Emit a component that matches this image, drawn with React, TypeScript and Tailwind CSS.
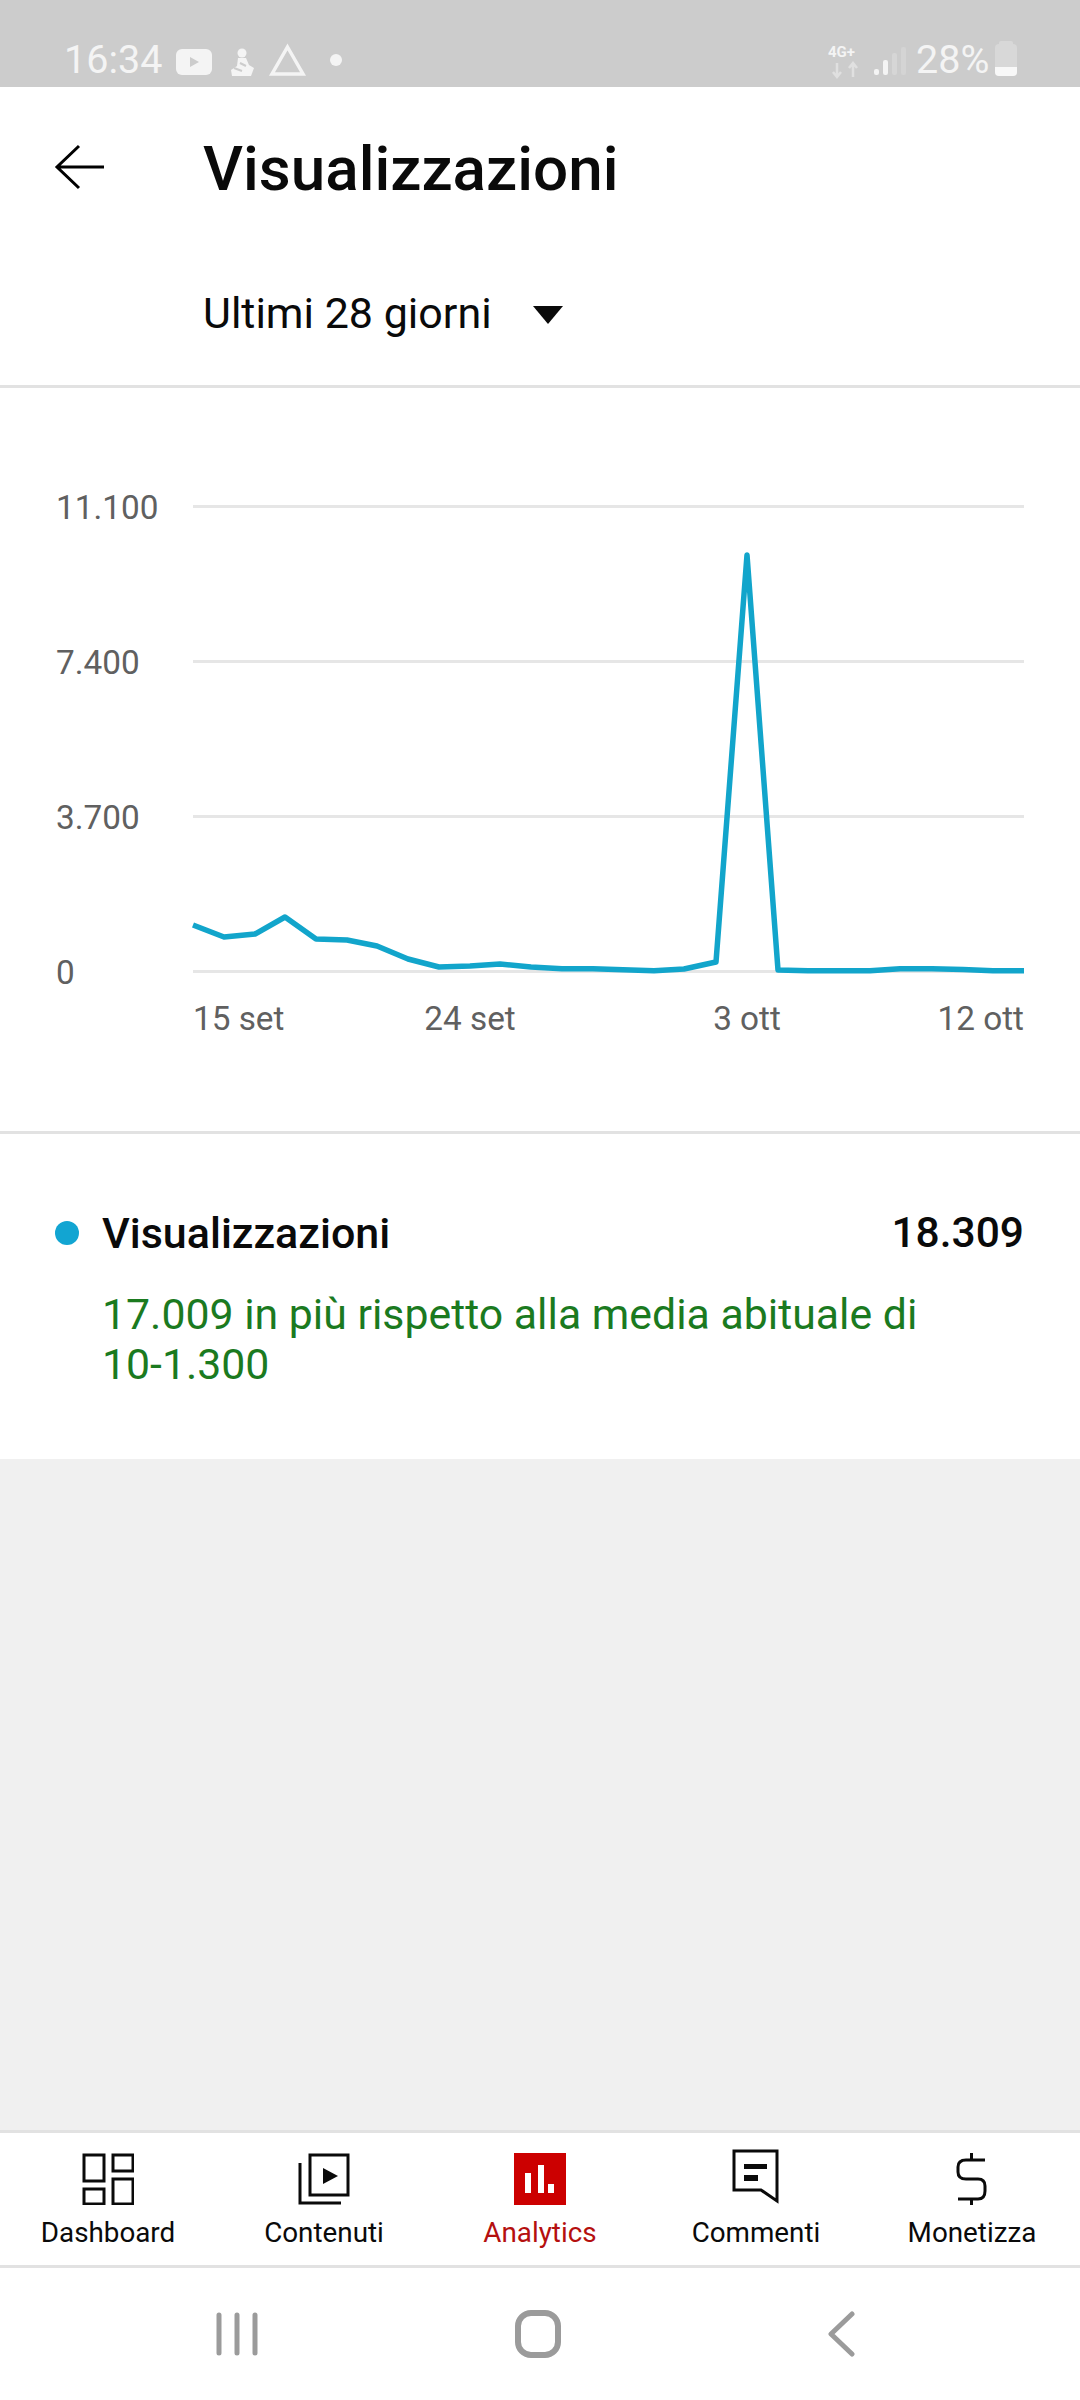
import React from "react";

const font = { fontFamily: "Roboto, sans-serif" };

const points =
  "193,925 224,937 255,934 285,917 316,939 347,940 377,946 408,959 439,967 470,966 500,964 531,967 562,968.7 593,968.7 623,969.7 654,970.7 684,969 716,962 747,555 778,970 808,970.7 839,970.7 870,970.7 900,968.7 932,968.7 963,969.5 993,970.7 1024,970.7";

const yTicks = ["11.100", "7.400", "3.700", "0"];

function StatusBar() {
  return (
    <div className="relative h-[87px] shrink-0 bg-[#cccccc] text-[#f4f4f4]">
      <div className="absolute left-[64px] top-[37px] text-[39.5px] leading-[46px]">16:34</div>
      <svg className="absolute left-[170px] top-[40px]" width="180" height="40" viewBox="170 40 180 40">
        <rect x="176" y="49" width="36" height="26" rx="6" fill="#f4f4f4" />
        <path d="M190 57v10l9-5z" fill="#cccccc" />
        <circle cx="242" cy="53" r="4.5" fill="#f4f4f4" />
        <path d="M238 58h8l3 7 5 3-3 8h-19l-1-6 6-4z" fill="#f4f4f4" />
        <path d="M234 68l8 3M240 63l6 3" stroke="#cccccc" strokeWidth="2" />
        <path d="M287.500 47L303 74H272Z" fill="none" stroke="#f4f4f4" strokeWidth="3.500" />
        <circle cx="336" cy="60" r="6" fill="#f4f4f4" />
      </svg>
      <div className="absolute left-[828px] top-[44px] text-[15px] leading-[17px] font-bold">4G+</div>
      <svg className="absolute left-[828px] top-[40px]" width="170" height="40" viewBox="828 40 170 40">
        <path d="M837 63v14M833 72l4 5 4-5" fill="none" stroke="#e0e0e0" strokeWidth="2.500" />
        <path d="M853 77V63M849 68l4-5 4 5" fill="none" stroke="#e0e0e0" strokeWidth="2.500" />
        <rect x="874" y="69" width="5" height="6" rx="2" fill="#f4f4f4" />
        <rect x="883" y="60" width="5" height="15" rx="2" fill="#f4f4f4" />
        <rect x="892" y="53" width="5" height="22" rx="2" fill="#d6d6d6" />
        <rect x="901" y="47" width="5" height="28" rx="2" fill="#d4d4d4" />
      </svg>
      <div className="absolute left-[916px] top-[37px] text-[39.5px] leading-[46px]">28%</div>
      <div className="absolute left-[999px] top-[41px] h-[3px] w-[14px] rounded-t-[2px] bg-[#d8d8d8]" />
      <div className="absolute left-[995px] top-[44px] flex h-[32px] w-[22px] flex-col justify-end overflow-hidden rounded-[4px] bg-[#d8d8d8]">
        <div className="h-[9px] bg-[#f8f8f8]" />
      </div>
    </div>
  );
}

function Header() {
  return (
    <div className="h-[301px] shrink-0 border-b-[3px] border-[#e2e2e2] pb-[6px]">
      <div className="flex h-[160px] items-center">
        <svg className="ml-[54px] mr-[97px] shrink-0" width="52" height="46" viewBox="0 0 52 46" fill="none" stroke="#000" strokeWidth="3">
          <path d="M50 23H4M25 2L3 23l22 21" />
        </svg>
        <div className="mt-[3px] text-[62px] leading-none font-medium text-[#0a0a0a]">Visualizzazioni</div>
      </div>
      <div className="flex h-[132px] items-center pl-[203px]">
        <div className="text-[43px] leading-none text-[#0a0a0a]">Ultimi 28 giorni</div>
        <svg className="ml-[41px] mt-[3px]" width="30" height="18" viewBox="0 0 30 18">
          <path d="M0 0h30L15 18z" fill="#0a0a0a" />
        </svg>
      </div>
    </div>
  );
}

function Chart() {
  return (
    <div className="relative h-[746px] shrink-0 border-b-[3px] border-[#e2e2e2] pt-[98px]">
      <div className="flex flex-col gap-[115px]">
        {yTicks.map((t) => (
          <div key={t} className="flex h-[40px] items-center">
            <div className="w-[193px] shrink-0 pl-[56px] pt-[3px] text-[33.3px] leading-none text-[#606060]">{t}</div>
            <div className="mr-[56px] h-[3px] flex-1 bg-[#e6e6e6]" />
          </div>
        ))}
      </div>
      <div className="ml-[193px] mr-[56px] mt-[8px] grid h-[40px] grid-cols-[138.5px_277px_277px_138.5px] items-center text-[33.3px] leading-none text-[#606060]">
        <div>15 set</div>
        <div className="text-center">24 set</div>
        <div className="text-center">3 ott</div>
        <div className="text-right">12 ott</div>
      </div>
      <svg className="absolute left-0 top-0" width="1080" height="745" viewBox="0 388 1080 745" fill="none">
        <polyline points={points} stroke="#12a5cb" strokeWidth="5.500" strokeLinejoin="round" />
      </svg>
    </div>
  );
}

function Legend() {
  return (
    <div className="h-[325px] shrink-0 pl-[55px] pr-[56px] pt-[79px]">
      <div className="flex h-[40px] items-center">
        <div className="h-[24px] w-[24px] shrink-0 rounded-full bg-[#12a5d2]" />
        <div className="ml-[23px] flex-1 text-[43px] leading-none font-medium text-[#0a0a0a]">Visualizzazioni</div>
        <div className="text-[42.5px] leading-none font-medium text-[#0a0a0a]">18.309</div>
      </div>
      <div className="ml-[47px] mt-[36px] w-[880px] text-[42.8px] leading-[50px] text-[#1b7a1f]">
        17.009 in più rispetto alla media abituale di <span className="whitespace-nowrap">10-1.300</span>
      </div>
    </div>
  );
}

function DashboardIcon() {
  return (
    <svg width="52" height="52" viewBox="0 0 52 52" fill="none" stroke="#0a0a0a" strokeWidth="3">
      <rect x="2" y="2" width="20" height="26" />
      <rect x="31" y="2" width="20" height="16" />
      <rect x="2" y="36" width="20" height="15" />
      <rect x="31" y="26" width="20" height="25" />
    </svg>
  );
}

function ContentIcon() {
  return (
    <svg width="52" height="52" viewBox="0 0 52 52" fill="none" stroke="#0a0a0a" strokeWidth="3">
      <rect x="12" y="2" width="38" height="40" />
      <path d="M2 10V50H43" />
      <path d="M25 15V31L40 23Z" fill="#0a0a0a" stroke="none" />
    </svg>
  );
}

function AnalyticsIcon() {
  return (
    <svg width="52" height="52" viewBox="0 0 52 52">
      <rect width="52" height="52" fill="#cc0000" />
      <rect x="11" y="20" width="6" height="20" fill="#fff" />
      <rect x="24" y="12" width="6" height="28" fill="#fff" />
      <rect x="34" y="31" width="6" height="9" fill="#fff" />
    </svg>
  );
}

function CommentIcon() {
  return (
    <svg width="48" height="56" viewBox="0 0 48 56" fill="none">
      <path d="M2 2H45V52L29 41H2Z" stroke="#0a0a0a" strokeWidth="3" />
      <rect x="12" y="15" width="23" height="5" fill="#0a0a0a" />
      <rect x="12" y="26" width="14" height="6" fill="#0a0a0a" />
    </svg>
  );
}

function MoneyIcon() {
  return (
    <svg width="32" height="52" viewBox="0 0 32 52" fill="none" stroke="#0a0a0a" strokeWidth="3">
      <path d="M15.500 0V6M15.500 46V52" />
      <path d="M29 7H10Q2 7 2 14V19Q2 26 10 26H22Q29 26 29 33V38Q29 46 22 46H2" />
    </svg>
  );
}

const tabs = [
  { label: "Dashboard", icon: <DashboardIcon /> },
  { label: "Contenuti", icon: <ContentIcon /> },
  { label: "Analytics", icon: <AnalyticsIcon />, active: true },
  { label: "Commenti", icon: <CommentIcon /> },
  { label: "Monetizza", icon: <MoneyIcon /> },
];

function BottomNav() {
  return (
    <div className="grid h-[138px] shrink-0 grid-cols-5 border-y-[3px] border-[#e2e2e2] bg-white">
      {tabs.map((tab) => (
        <div key={tab.label} className="flex flex-col items-center">
          <div className="flex h-[72px] items-end justify-center">{tab.icon}</div>
          <div className={`mt-[12px] text-[27.8px] leading-[32px] ${tab.active ? "text-[#b50f0f]" : "text-[#0a0a0a]"}`}>
            {tab.label}
          </div>
        </div>
      ))}
    </div>
  );
}

function SystemNav() {
  return (
    <div className="flex h-[132px] shrink-0 items-center bg-white">
      <svg className="ml-[216px]" width="42" height="44" viewBox="0 0 42 44" stroke="#9b9b9b" strokeWidth="5" strokeLinecap="round">
        <path d="M3 3V41M21 3V41M39 3V41" />
      </svg>
      <svg className="ml-[257px]" width="46" height="48" viewBox="0 0 46 48" fill="none" stroke="#9b9b9b" strokeWidth="6">
        <rect x="3" y="3" width="40" height="42" rx="13" />
      </svg>
      <svg className="ml-[266px]" width="28" height="46" viewBox="0 0 28 46" fill="none" stroke="#9b9b9b" strokeWidth="5" strokeLinecap="round" strokeLinejoin="round">
        <path d="M25 3L4 23l21 20" />
      </svg>
    </div>
  );
}

export default function App() {
  return (
    <div className="flex h-[2400px] w-[1080px] flex-col overflow-hidden bg-white" style={font}>
      <StatusBar />
      <Header />
      <Chart />
      <Legend />
      <div className="flex-1 bg-[#f0f0f0]" />
      <BottomNav />
      <SystemNav />
    </div>
  );
}
